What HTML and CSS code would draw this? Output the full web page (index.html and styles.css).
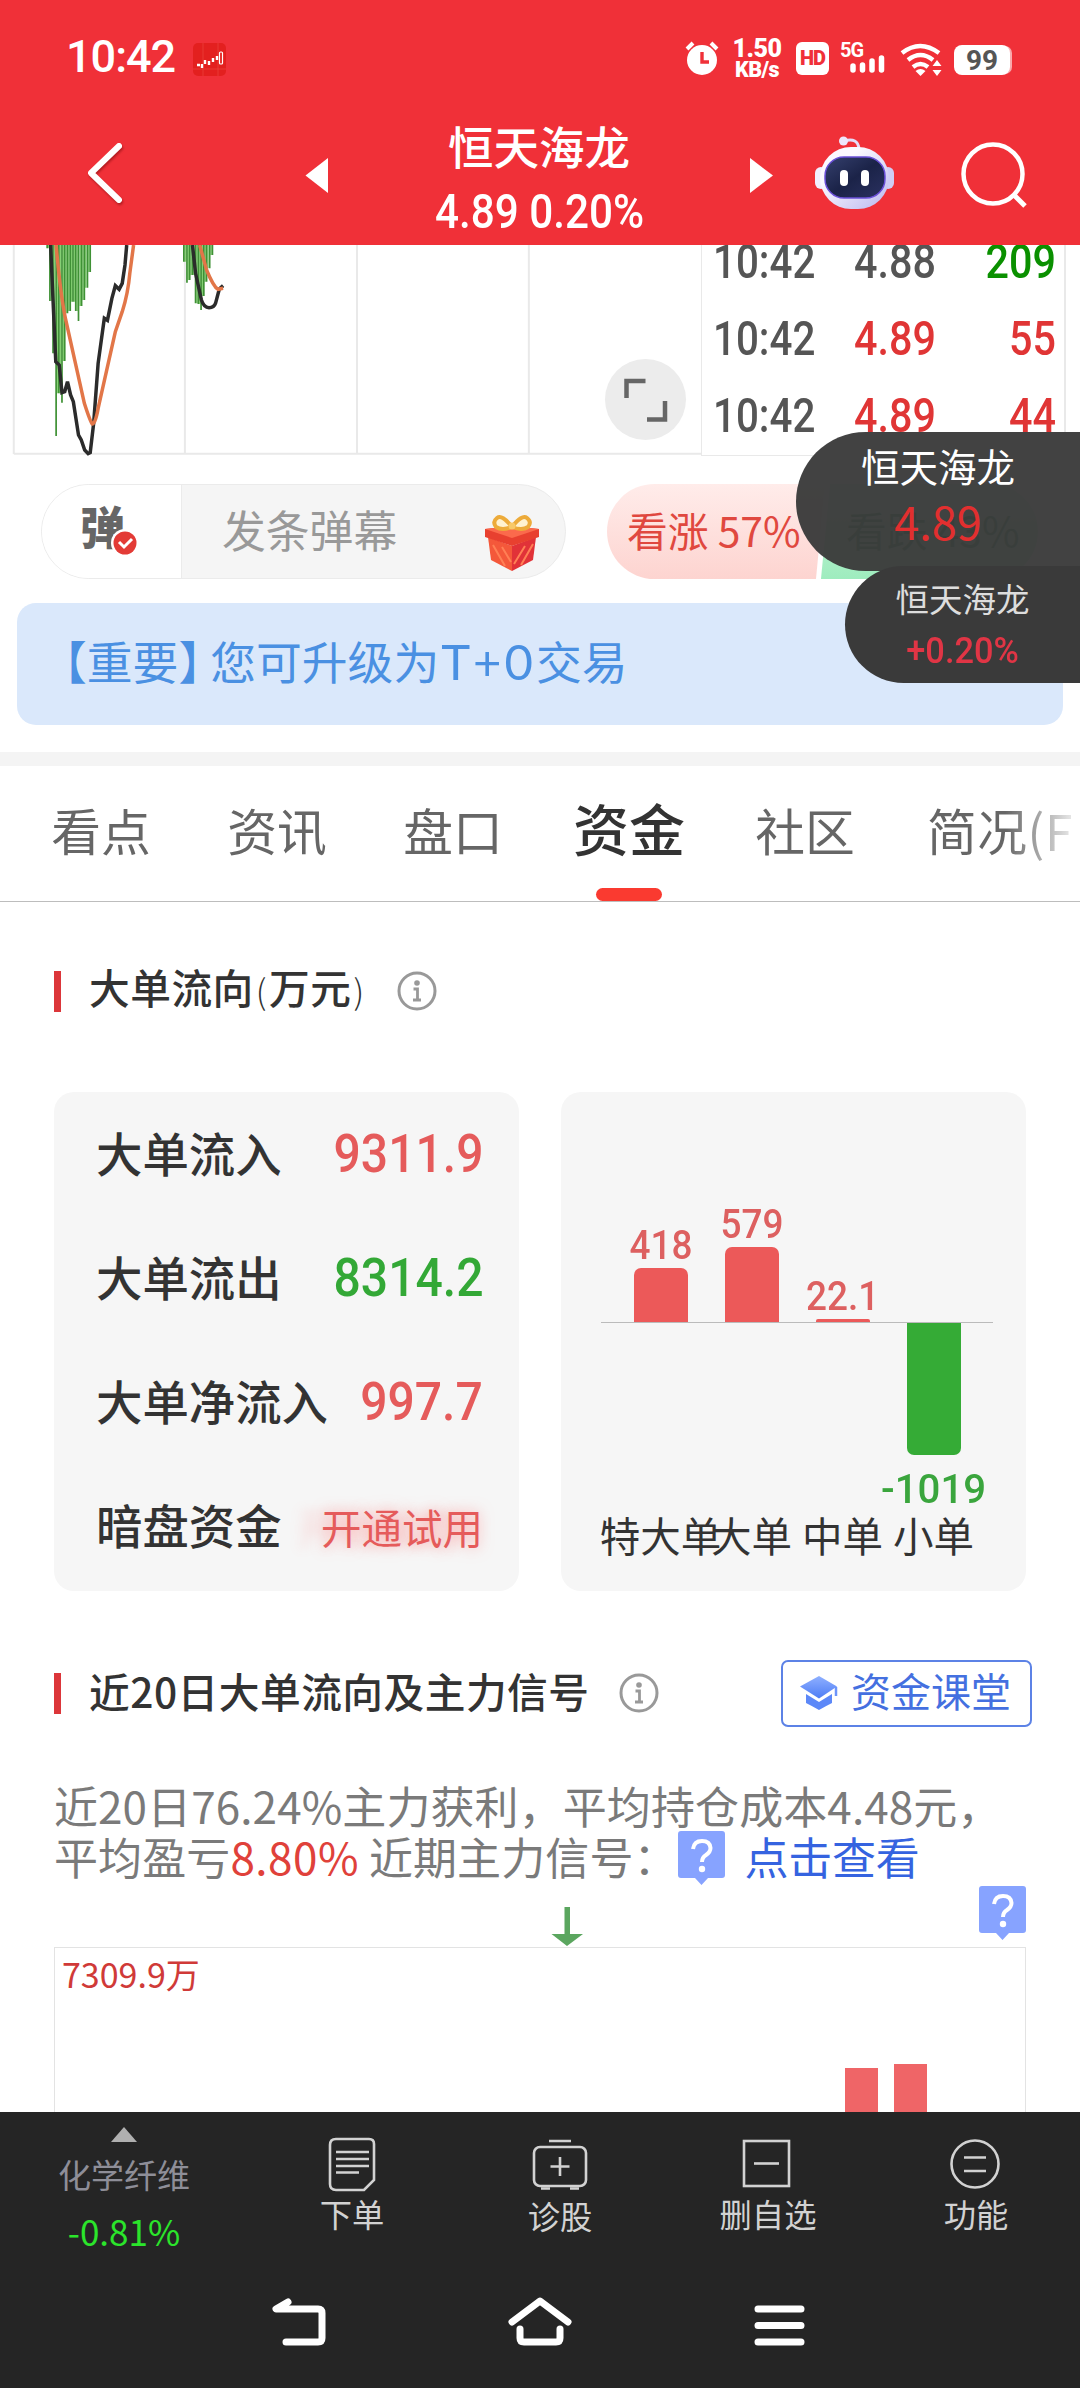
FILE: index.html
```html
<!DOCTYPE html>
<html lang="zh-CN">
<head>
    <meta charset="UTF-8">
    <meta name="viewport" content="width=device-width, initial-scale=1.0">
    <title>恒天海龙</title>
    <link rel="stylesheet" href="styles.css">
</head>
<body>
    <header class="header">
        <div class="status">
            <span class="clock">10:42</span>
            <svg class="app-icon" width="33" height="33" viewBox="0 0 33 33">
                <rect width="33" height="33" rx="5" fill="#e3201f"/>
                <path d="M10 0v33M0 26h33M25 0v33" stroke="#ec4a45" stroke-width=".6"/>
                <path d="M4 22h3M9 21v4M12 17v4M16 18v4M20 15v4M24 13v4" stroke="#fff" stroke-width="2.4"/>
                <rect x="26.5" y="9" width="3" height="12" rx="1" fill="none" stroke="#fff" stroke-width="1.2"/>
            </svg>
            <svg class="alarm" width="34" height="36" viewBox="0 0 34 36">
                <circle cx="17" cy="20" r="15" fill="#fff"/>
                <path d="M2 9l6-6M32 9l-6-6" stroke="#fff" stroke-width="4"/>
                <path d="M17 12v10h7" fill="none" stroke="#f03038" stroke-width="3.4"/>
            </svg>
            <div class="speed"><b>1.50</b><b>KB/s</b></div>
            <span class="hd">HD</span>
            <div class="cell">
                <b>5G</b>
                <svg width="46" height="34" viewBox="0 0 46 34">
                    <path d="M13 25v4M22.500 24v5M32 20v9M41.500 17v12" stroke="#fff" stroke-width="5.500" stroke-linecap="round"/>
                </svg>
            </div>
            <svg class="wifi" width="42" height="34" viewBox="0 0 42 34">
                <path d="M2 10q18-14 37 0M8 17q12.500-10 25 0M13 24q7.500-6 15 0" fill="none" stroke="#fff" stroke-width="4.400"/>
                <path d="M20.500 33l-5-5q5-4 10 0z" fill="#fff"/>
                <path d="M37 17l4.500 6h-9zM37 33l4.500-6h-9z" fill="#fff"/>
            </svg>
            <span class="battery">99</span>
        </div>
        <div class="titlebar">
            <svg class="back" width="290" height="129" viewBox="0 0 290 129">
                <path d="M119 30L91 57l28 27" fill="none" stroke="#fff" stroke-width="6" stroke-linecap="round" stroke-linejoin="round"/>
            </svg>
            <svg width="100" height="129" viewBox="0 0 100 129"><path d="M38 42v35L15.500 59.500z" fill="#fff"/></svg>
            <div class="stock">
                <div class="stock-name">恒天海龙</div>
                <div class="stock-price"><span>4.89 0.20%</span></div>
            </div>
            <svg width="100" height="129" viewBox="0 0 100 129"><path d="M60 42v35l23-17.500z" fill="#fff"/></svg>
            <svg width="120" height="129" viewBox="0 0 120 129">
                <defs>
                    <linearGradient id="shell" x1="0" y1="0" x2="1" y2="1"><stop offset=".3" stop-color="#fbf9ff"/><stop offset="1" stop-color="#b9b6ee"/></linearGradient>
                    <linearGradient id="visor" x1="0" y1="0" x2="1" y2="1"><stop offset="0" stop-color="#35406e"/><stop offset=".5" stop-color="#1b2348"/><stop offset="1" stop-color="#2a3160"/></linearGradient>
                </defs>
                <path d="M54 25q14-4 15 8" fill="none" stroke="#e4dcf8" stroke-width="3"/>
                <circle cx="53.500" cy="25" r="4.500" fill="#eee6fb"/>
                <rect x="25" y="51" width="12" height="22" rx="6" fill="#f1eefe"/>
                <rect x="92" y="51" width="12" height="22" rx="6" fill="#cfcdf4"/>
                <rect x="30" y="31" width="69" height="62" rx="31" fill="url(#shell)"/>
                <rect x="35" y="41" width="60" height="41" rx="19" fill="url(#visor)" stroke="#6a4fd8" stroke-width="1.500"/>
                <rect x="50" y="54" width="8" height="16" rx="4" fill="#fff"/>
                <rect x="71" y="54" width="8" height="16" rx="4" fill="#fff"/>
            </svg>
            <svg width="170" height="129" viewBox="0 0 170 129">
                <circle cx="83" cy="58" r="29.500" fill="none" stroke="#fff" stroke-width="4.500"/>
                <path d="M104 79l11 11" stroke="#fff" stroke-width="5"/>
            </svg>
        </div>
    </header>

    <!-- kline tail and tick list -->
    <section class="market">
        <div class="kline">
            <svg class="kline-svg" width="701" height="211" viewBox="0 15 2036 633" preserveAspectRatio="none">
                <path d="M40 15v627M537 15v627M1037 15v627M1536 15v627M40 641.500h1996" class="grid-line"/>
                <path d="M141 15v10M150 15v168M158 15v325M167 15v445M175 15v445M184 15v348M192 15v205M200 15v198M208 15v170M216 15v170M224 15v198M233 15v183M241 15v165M249 15v128M258 15v81M538 15v50M547 15v105M555 15v90M563 15v90M572 15v175M580 15v177M588 15v153M596 15v110M604 15v70M613 15v30" class="bar-light"/>
                <path d="M137 15v10M145 15v168M154 15v325M163 15v573M171 15v445M180 15v473M188 15v348M196 15v205M204 15v198M212 15v170M220 15v198M228 15v228M237 15v183M245 15v165M254 15v128M262 15v81M534 15v50M543 15v113M551 15v105M559 15v90M568 15v175M576 15v177M584 15v195M592 15v153M600 15v110M609 15v70M617 15v30" class="bar-dark"/>
                <path d="M147 15L154 180L162 365L172 375L180 458L188 455L196 425L205 465L213 485L228 585L236 600L246 630L256 641L262 638L272 550L285 370L303 235L312 241L325 175L335 137L346 148L355 130L363 75L368 15M559 15L568 100L585 180Q592 203 607 203Q622 203 626 190L637 147L648 137" class="line-dark"/>
                <path d="M163 15Q175 160 190 235L245 490Q262 545 268 552Q277 552 285 505L335 275L355 215Q372 160 377 100L388 15M580 15L600 90Q620 140 633 148L648 145" class="line-orange"/>
            </svg>
            <div class="expand">
                <svg width="81" height="81" viewBox="0 0 81 81">
                    <path d="M21.500 39V22h19M42 60.500h18V42" fill="none" stroke="#666" stroke-width="4.500"/>
                </svg>
            </div>
        </div>
        <div class="ticks">
            <div class="tick"><span class="time">10:42</span><span>4.88</span><span class="deep-green">209</span></div>
            <div class="tick"><span class="time">10:42</span><span class="deep-red">4.89</span><span class="deep-red">55</span></div>
            <div class="tick"><span class="time">10:42</span><span class="deep-red">4.89</span><span class="deep-red">44</span></div>
        </div>
    </section>

    <section class="vote-row">
        <div class="danmu">
            <div class="danmu-switch">弹
                <svg class="danmu-check" width="28" height="28" viewBox="0 0 28 28">
                    <circle cx="14" cy="14" r="14" fill="#fff"/><circle cx="14" cy="14" r="11.500" fill="#e33b36"/>
                    <path d="M8 13l5 5 8-8" fill="none" stroke="#fff" stroke-width="3"/>
                </svg>
            </div>
            <div class="danmu-input">发条弹幕</div>
            <svg class="gift" width="54" height="60" viewBox="0 0 54 60">
                <path d="M3 25l24 9v25L6 48z" fill="#f4583a"/><path d="M51 25l-24 9v25l21-11z" fill="#e13238"/>
                <path d="M8 33l12 21M17 35l9 15M48 32L36 53M40 34L29 52" stroke="#ff7f55" stroke-width="2"/>
                <path d="M0 17l27-3 27 3v8l-27 9-27-9z" fill="#e8402f"/><path d="M0 17l27-3 27 3-27 9z" fill="#fb6a4c"/>
                <path d="M27 15q-10-13-15-9t-1 9q6 4 16 0zM27 15q10-13 15-9t1 9q-6 4-16 0z" fill="#fff2cf" stroke="#edab3a" stroke-width="4"/>
                <circle cx="27" cy="14" r="3.500" fill="#f8c968"/>
            </svg>
        </div>
        <div class="vote">
            <div class="vote-up">看涨 57%</div>
            <div class="vote-down">看跌 43%</div>
        </div>
    </section>

    <div class="notice"><span class="notice-tag">【重要】</span>您可升级为<span class="notice-latin">T+0</span>交易</div>

    <nav class="tabs">
        <a class="tab">看点</a>
        <a class="tab">资讯</a>
        <a class="tab">盘口</a>
        <a class="tab active">资金</a>
        <a class="tab">社区</a>
        <a class="tab last">简况(F</a>
    </nav>

    <main class="content">
        <div class="section-title first">
            <h2>大单流向<i>(</i>万元<i>)</i></h2>
            <svg class="info" width="40" height="40" viewBox="0 0 40 40"><circle cx="20" cy="20" r="18" fill="none" stroke="#999" stroke-width="3"/><circle cx="20" cy="12" r="2.800" fill="#999"/><path d="M16.500 18h4v11M16 29h8" fill="none" stroke="#999" stroke-width="2.800"/></svg>
        </div>

        <div class="cards">
            <div class="card flow">
                <div class="flow-row"><span>大单流入</span><b class="red">9311.9</b></div>
                <div class="flow-row"><span>大单流出</span><b class="green">8314.2</b></div>
                <div class="flow-row"><span>大单净流入</span><b class="red">997.7</b></div>
                <div class="flow-row"><span>暗盘资金</span><em class="trial">开通试用</em></div>
            </div>
            <div class="card chart">
                <div class="chart-up">
                    <div class="col"><b>418</b><div class="bar" style="height: 54px"></div></div>
                    <div class="col"><b>579</b><div class="bar" style="height: 75px"></div></div>
                    <div class="col"><b>22.1</b><div class="bar flat" style="height: 3px"></div></div>
                    <div class="col"></div>
                </div>
                <div class="chart-down">
                    <div class="col"></div><div class="col"></div><div class="col"></div>
                    <div class="col"><div class="bar" style="height: 132px"></div><b>-1019</b></div>
                </div>
                <div class="chart-names"><span>特大单</span><span>大单</span><span>中单</span><span>小单</span></div>
            </div>
        </div>

        <div class="section-title second">
            <h2>近20日大单流向及主力信号</h2>
            <svg class="info" width="40" height="40" viewBox="0 0 40 40"><circle cx="20" cy="20" r="18" fill="none" stroke="#999" stroke-width="3"/><circle cx="20" cy="12" r="2.800" fill="#999"/><path d="M16.500 18h4v11M16 29h8" fill="none" stroke="#999" stroke-width="2.800"/></svg>
            <a class="course">
                <svg width="38" height="34" viewBox="0 0 38 34">
                    <defs><linearGradient id="cap" x1="0" y1="0" x2="0" y2="1"><stop offset="0" stop-color="#8fb0ff"/><stop offset="1" stop-color="#4d7cf5"/></linearGradient></defs>
                    <path d="M19 0l18 10.500-18 12L0 10.500z" fill="url(#cap)"/>
                    <path d="M6 18l13 8 13-8v9q-6 3-13 7-7-4-13-7z" fill="#5c88f8"/>
                    <path d="M36 11v9" stroke="#6c94fa" stroke-width="2.500"/>
                </svg>
                <span>资金课堂</span>
            </a>
        </div>

        <p class="summary">近20日76.24%主力获利，平均持仓成本4.48元，<br>平均盈亏<span class="profit">8.80%</span> 近期主力信号：<svg class="ask" width="47" height="54" viewBox="0 0 47 54"><path d="M3 0h41q3 0 3 3v41q0 3-3 3H30l-6.500 7-6.500-7H3q-3 0-3-3V3q0-3 3-3z" fill="#87a3ff"/><path d="M15 18q1-8 9-8t8.500 7q0 4-4.500 7-4 2.500-4 7" fill="none" stroke="#fff" stroke-width="4"/><circle cx="24" cy="38" r="3.200" fill="#fff"/></svg><a class="look">点击查看</a></p>

        <div class="signals">
            <svg width="972" height="61" viewBox="0 0 972 61">
                <path d="M510.500 21v27h-13l15.500 12 16-12h-13V21z" fill="#5ba65f"/>
                <g transform="translate(925 0)"><path d="M3 0h41q3 0 3 3v41q0 3-3 3H30l-6.500 7-6.500-7H3q-3 0-3-3V3q0-3 3-3z" fill="#87a3ff"/><path d="M15 18q1-8 9-8t8.500 7q0 4-4.500 7-4 2.500-4 7" fill="none" stroke="#fff" stroke-width="4"/><circle cx="24" cy="38" r="3.200" fill="#fff"/></g>
            </svg>
        </div>
        <div class="history">
            <span class="history-max">7309.9万</span>
            <div class="history-bars">
                <div style="height: 44px"></div>
                <div style="height: 48px"></div>
            </div>
        </div>
    </main>

    <footer class="footer">
        <div class="actions">
            <div class="sector">
                <svg width="26" height="15" viewBox="0 0 26 15"><path d="M13 0l13 15H0z" fill="#b0b0b0"/></svg>
                <span class="sector-name">化学纤维</span>
                <span class="sector-rate">-0.81%</span>
            </div>
            <div class="action">
                <svg width="60" height="60" viewBox="0 0 60 60"><path d="M14 7h33q5 0 5 5v36L42 58H14q-6 0-6-6V13q0-6 6-6z"/><path d="M14 20h33M14 27h33M14 34h33M14 40.500h23"/></svg>
                <span>下单</span>
            </div>
            <div class="action">
                <svg width="60" height="60" viewBox="0 0 60 60"><rect x="4" y="15" width="52" height="39" rx="6"/><path d="M19 9h22M30 25v19M20.500 34.500h19M11 56.500h9M40 56.500h9"/></svg>
                <span class="lower">诊股</span>
            </div>
            <div class="action">
                <svg width="60" height="60" viewBox="0 0 60 60"><rect x="6" y="9" width="45" height="45"/><path d="M16 31.500h25"/></svg>
                <span>删自选</span>
            </div>
            <div class="action">
                <svg width="60" height="60" viewBox="0 0 60 60"><circle cx="29" cy="32" r="23.500"/><path d="M18 25.500h22M18 39h22"/></svg>
                <span>功能</span>
            </div>
        </div>
        <div class="sysnav">
            <svg width="62" height="60" viewBox="0 0 62 60"><path d="M20 9L8 16h42q4 0 4 4v25q0 4-4 4H18"/></svg>
            <svg width="70" height="60" viewBox="0 0 70 60"><path d="M7 29L35 8l28 21M15 36v9q0 4 4 4h32q4 0 4-4v-9"/></svg>
            <svg width="62" height="60" viewBox="0 0 62 60"><path d="M8 16h43M8 32.500h43M8 49h43"/></svg>
        </div>
    </footer>

    <!-- floating quote windows -->
    <div class="float float-price"><span>恒天海龙</span><b>4.89</b></div>
    <div class="float float-rate"><span>恒天海龙</span><b>+0.20%</b></div>
</body>
</html>
```
FILE: styles.css
```css
* {
    box-sizing: border-box;
}

body {
    margin: 0;
    width: 1080px;
    height: 2388px;
    overflow: hidden;
    position: relative;
    background: #fff;
    color: #333;
    font-family: "Noto Sans CJK SC", sans-serif;
}

svg {
    display: block;
    flex: none;
}

/* header */
.header {
    height: 245px;
    background: #f03038;
    color: #fff;
}

.status {
    height: 116px;
    padding-left: 66px;
    display: flex;
    align-items: center;
    font-family: Roboto, sans-serif;
}

.clock {
    width: 127px;
    font-size: 45px;
    font-weight: 500;
    line-height: 60px;
    letter-spacing: -1px;
    margin-top: -2px;
}

.app-icon {
    margin-top: 3px;
}

.alarm {
    margin-left: 459px;
}

.speed {
    width: 60px;
    margin-left: 8px;
    padding-top: 1px;
    display: flex;
    flex-direction: column;
    align-items: center;
    font-size: 21.5px;
    line-height: 20px;
    font-weight: 700;
    letter-spacing: -.5px;
}

.speed b:first-child {
    font-size: 25px;
    line-height: 22px;
}

.hd {
    width: 33px;
    height: 33px;
    margin-left: 9px;
    border-radius: 6px;
    background: #fff;
    color: #f03038;
    font-size: 20px;
    font-weight: 900;
    line-height: 33px;
    text-align: center;
    letter-spacing: -1px;
}

.cell {
    display: grid;
    margin-left: 11px;
}

.cell b {
    grid-area: 1 / 1;
    font-size: 20px;
    line-height: 18px;
    letter-spacing: -1px;
}

.cell svg {
    grid-area: 1 / 1;
}

.wifi {
    margin-left: 14px;
    margin-top: 3px;
}

.battery {
    width: 56px;
    height: 30px;
    margin-left: 12px;
    margin-top: 4px;
    border-radius: 8px;
    background: #fff;
    box-shadow: 3px 0 0 -1px #f9a9ac;
    color: #555;
    font-size: 28px;
    font-weight: 700;
    line-height: 31px;
    text-align: center;
}

.titlebar {
    display: grid;
    grid-template-columns: 290px 100px 300px 100px 120px 170px;
}

.back {
    filter: drop-shadow(1px 2px 1px rgba(90, 0, 0, .4));
}

.stock {
    text-align: center;
}

.stock-name {
    font-size: 45.5px;
    line-height: 58px;
    font-weight: 500;
    margin-left: -2px;
}

.stock-price {
    font-family: Roboto, sans-serif;
    font-size: 47.5px;
    line-height: 76px;
    font-weight: 500;
    white-space: nowrap;
}

.stock-price span {
    display: inline-block;
    transform: scaleX(.89);
}

/* kline and ticks */
.market {
    height: 211px;
    display: flex;
}

.kline {
    position: relative;
    width: 701px;
}

.kline path {
    fill: none;
}

.kline-svg path {
    vector-effect: non-scaling-stroke;
}

.kline-svg .grid-line {
    stroke: #e9e9e9;
    stroke-width: 2;
}

.bar-light {
    stroke: #86d075;
    stroke-width: 1.5;
}

.bar-dark {
    stroke: #3f9135;
    stroke-width: 1.7;
}

.line-dark {
    stroke: #2b2b2b;
    stroke-width: 3.5;
}

.line-orange {
    stroke: #e27648;
    stroke-width: 3.5;
}

.expand {
    position: absolute;
    left: 605px;
    top: 114px;
    border-radius: 50%;
    background: #ececec;
}

.ticks {
    width: 365px;
    height: 211px;
    overflow: hidden;
    border: solid #e9e9e9;
    border-width: 0 2px 1px 1px;
}

.ticks .tick:first-child {
    margin-top: -22px;
}

.tick {
    height: 77px;
    padding: 0 8px 0 11px;
    display: grid;
    grid-template-columns: 141px 120px 1fr;
    color: #555;
    font: 500 48px/77px Roboto, sans-serif;
}

.tick span {
    transform: scaleX(.86);
    transform-origin: left;
}

.tick .time {
    transform: scaleX(.84);
}

.tick span:last-child {
    text-align: right;
    transform-origin: right;
}

.deep-red {
    color: #e03535;
}

.deep-green {
    color: #0a9000;
}

/* danmu and vote */
.vote-row {
    display: flex;
    height: 147px;
    padding: 28px 0 0 41px;
}

.danmu {
    width: 525px;
    height: 95px;
    display: flex;
    overflow: hidden;
    border: 1px solid #ebebeb;
    border-radius: 48px;
    background: #f5f5f5;
}

.danmu-switch {
    position: relative;
    width: 140px;
    padding-left: 38px;
    border-right: 1px solid #ebebeb;
    background: #fff;
    color: #666;
    font-size: 45px;
    font-weight: 900;
    line-height: 81px;
}

.danmu-check {
    position: absolute;
    left: 69px;
    top: 44px;
}

.danmu-input {
    width: 303px;
    padding-left: 40px;
    color: #999;
    font-size: 43.8px;
    line-height: 89px;
}

.gift {
    margin-top: 27px;
}

.vote {
    display: flex;
    width: 431px;
    height: 95px;
    margin-left: 41px;
    border-radius: 48px;
    overflow: hidden;
    font-size: 40.8px;
    line-height: 91px;
    white-space: pre;
}

.vote-up {
    width: 218px;
    padding-left: 20px;
    background: linear-gradient(#ffecea, #fdd4d0);
    color: #e0483f;
    clip-path: polygon(0 0, 100% 0, 209px 100%, 0 100%);
}

.vote-down {
    flex: 1;
    margin-left: -4px;
    padding-left: 25px;
    background: linear-gradient(#cdf7dd, #9eecbe);
    color: #1f9a58;
    clip-path: polygon(9px 0, 100% 0, 100% 100%, 0 100%);
}

.notice {
    width: 1046px;
    height: 122px;
    margin-left: 17px;
    padding-left: 24px;
    border-radius: 19px;
    background: #dae8fb;
    color: #4a90e2;
    font-size: 45.8px;
    line-height: 114px;
}

.notice-tag {
    margin-right: -14px;
}

.notice-latin {
    margin-left: 2px;
    letter-spacing: 3px;
    font-family: Lato, sans-serif;
    font-size: 49px;
}

/* tabs */
.tabs {
    display: flex;
    height: 150px;
    margin-top: 27px;
    padding-left: 13px;
    overflow: hidden;
    border-top: 14px solid #f4f4f4;
    border-bottom: 1px solid #bdbdbd;
}

.tab {
    flex: none;
    width: 176px;
    color: #666;
    font-size: 49.8px;
    line-height: 127px;
    text-align: center;
    white-space: nowrap;
}

.tab.active {
    display: flex;
    flex-direction: column;
    align-items: center;
    justify-content: space-between;
    color: #333;
    font-size: 56px;
    font-weight: 500;
    line-height: 122px;
}

.tab.active::after {
    content: "";
    width: 66px;
    height: 14px;
    border-radius: 7px;
    background: #fa3a30;
}

.tab.last {
    width: 187px;
    padding-left: 34px;
    text-align: left;
    letter-spacing: .5px;
    background: linear-gradient(90deg, #666 60%, rgba(102, 102, 102, .1) 98%);
    -webkit-background-clip: text;
    background-clip: text;
    color: transparent;
}

/* money flow */
.content {
    height: 1210px;
    overflow: hidden;
    padding: 0 54px;
}

.section-title {
    display: flex;
    align-items: center;
    height: 70px;
}

.section-title.first {
    margin-top: 54px;
}

.section-title::before {
    content: "";
    width: 7px;
    height: 41px;
    background: #dc363a;
}

.section-title h2 {
    margin: -5px 0 0 28px;
    font-size: 40.7px;
    font-weight: 500;
    line-height: 60px;
    letter-spacing: .5px;
}

.section-title h2 i {
    font-style: normal;
    font-weight: 300;
    font-size: 34px;
    margin: 0 2px;
}

.info {
    margin-left: 30px;
}

.cards {
    display: flex;
    justify-content: space-between;
    margin-top: 66px;
}

.card {
    width: 465px;
    height: 499px;
    border-radius: 20px;
    background: #f6f6f6;
}

.flow-row {
    height: 124px;
    padding: 0 36px 0 42px;
    display: flex;
    justify-content: space-between;
    font-size: 46.4px;
    font-weight: 500;
    line-height: 120px;
}

.flow-row b {
    font: 500 54px/123px Roboto, sans-serif;
    transform: scaleX(.89);
    transform-origin: right;
}

.red {
    color: #e55b5b;
}

.green {
    color: #33a836;
}

.trial {
    color: #e55b5b;
    font-size: 40.5px;
    font-style: normal;
    font-weight: 400;
    line-height: 125px;
    text-shadow: 0 0 14px rgba(255, 120, 120, .6), -24px 0 12px rgba(255, 120, 120, .25);
}

.chart {
    padding: 0 33px 0 40px;
}

.chart-up {
    height: 231px;
    padding-left: 14px;
    display: flex;
    border-bottom: 1px solid #bbb;
}

.chart-down {
    height: 182px;
    padding-left: 14px;
    display: flex;
}

.col {
    flex: none;
    width: 91px;
    display: flex;
    flex-direction: column;
    align-items: center;
}

.chart-up .col {
    justify-content: flex-end;
    color: #dd6060;
}

.col b {
    font: 500 41px/46px Roboto, sans-serif;
    transform: scaleX(.9);
}

.col .bar {
    flex: none;
    width: 54px;
    border-radius: 7px 7px 0 0;
    background: #ec5959;
}

.col .bar.flat {
    border-radius: 2px 2px 0 0;
}

.chart-down .col {
    color: #3aa53d;
}

.chart-down .bar {
    border-radius: 0 0 7px 7px;
    background: #35ab36;
}

.chart-down b {
    margin-top: 11px;
    transform: scaleX(.98);
}

.chart-names {
    padding-left: 14px;
    display: flex;
    font-size: 40.5px;
    line-height: 60px;
}

.chart-names span {
    flex: none;
    width: 91px;
    display: flex;
    justify-content: center;
    white-space: nowrap;
}

.section-title.second {
    margin-top: 67px;
    margin-right: -6px;
}

.course {
    width: 251px;
    height: 67px;
    margin-left: auto;
    padding-left: 17px;
    display: flex;
    align-items: center;
    gap: 13px;
    border: 2px solid #5c82e6;
    border-radius: 7px;
    color: #4470e0;
    font-size: 40px;
    line-height: 58px;
}

.course span {
    margin-top: -6px;
}

.summary {
    height: 106px;
    margin: 52px -20px 0 0;
    color: #7a7a7a;
    font-size: 44px;
    line-height: 51px;
    letter-spacing: .1px;
    white-space: nowrap;
}

.profit {
    color: #e0413a;
    letter-spacing: .5px;
}

.ask {
    display: inline-block;
    margin: -10px 20px -10px 0;
    vertical-align: 0;
}

.look {
    color: #3563e0;
    letter-spacing: -.3px;
}

.history {
    height: 200px;
    border: 1px solid #e3e3e3;
    display: flex;
    justify-content: space-between;
}

.history-max {
    padding-left: 7px;
    color: #d03a38;
    font-size: 34px;
    line-height: 52px;
}

.history-bars {
    display: flex;
    gap: 16px;
    height: 164px;
    margin-right: 98px;
    align-items: flex-end;
}

.history-bars div {
    width: 33px;
    background: #ef6567;
}

/* footer */
.footer {
    height: 276px;
    background: #252525;
}

.actions {
    height: 162px;
    display: grid;
    grid-template-columns: 248px repeat(4, 208px);
}

.sector {
    display: flex;
    flex-direction: column;
    align-items: center;
    padding-top: 15px;
}

.sector-name {
    color: #8e8e98;
    font-size: 33px;
    line-height: 64px;
}

.sector-rate {
    color: #2be52b;
    font-size: 35px;
    line-height: 50px;
}

.action {
    display: flex;
    flex-direction: column;
    align-items: center;
    padding-top: 20px;
    color: #d2d2d2;
    font-size: 32.3px;
    line-height: 42px;
}

.action svg {
    fill: none;
    stroke: #d2d2d2;
    stroke-width: 2.6;
}

.action .lower {
    margin-top: 2px;
}

.sysnav {
    display: flex;
    justify-content: center;
    gap: 175px;
    padding: 19px 0 0 0;
}

.sysnav svg {
    fill: none;
    stroke: #fff;
    stroke-width: 7;
    stroke-linecap: round;
    stroke-linejoin: round;
}

/* floating windows */
.float {
    position: absolute;
    right: 0;
    display: flex;
    flex-direction: column;
    align-items: center;
}

.float-price {
    top: 432px;
    width: 284px;
    height: 139px;
    border-radius: 70px 0 0 70px;
    background: rgba(58, 58, 58, .96);
    color: #fff;
    font-size: 38.5px;
    line-height: 66px;
}

.float-price b {
    color: #e22f2f;
    font-size: 45px;
    font-weight: 400;
    line-height: 46px;
}

.float-rate {
    top: 566px;
    width: 235px;
    height: 117px;
    border-radius: 59px 0 0 59px;
    background: #3a3a3a;
    color: #ddd;
    font-size: 33.5px;
    line-height: 63px;
}

.float-rate b {
    color: #e03545;
    font: 500 37px/44px Roboto, sans-serif;
    transform: scaleX(.93);
}
```
